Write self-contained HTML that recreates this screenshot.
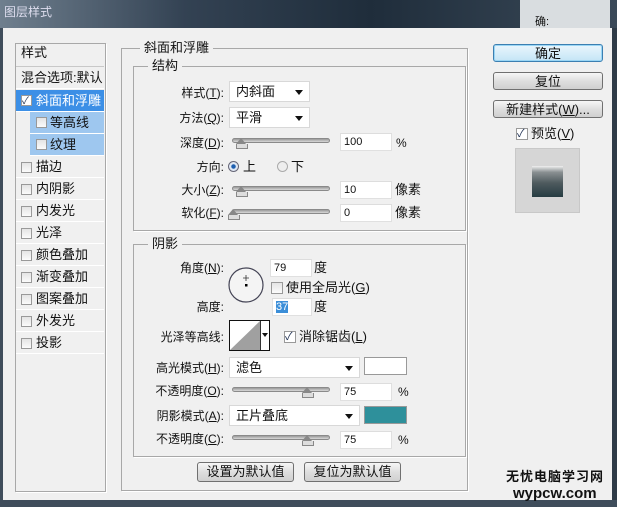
<!DOCTYPE html><html><head><meta charset="utf-8"><style>
*{margin:0;padding:0;box-sizing:border-box}
body{width:617px;height:507px;overflow:hidden;background:#f0f0f0;position:relative;font-family:"Liberation Sans","Noto Sans CJK SC",sans-serif;font-size:12px;color:#111}
.a{position:absolute}
.t{position:absolute;line-height:14px;white-space:nowrap}
.box{position:absolute;border:1px solid #a8a8a8;box-shadow:1px 1px 0 #fff}
.lg{position:absolute;background:#f0f0f0;padding:0 4px;line-height:14px;font-size:13px}
.row{position:absolute;left:16px;width:88px;height:22px;border-bottom:1px solid #fff;line-height:22px}
.cb{position:absolute;width:11px;height:11px;border:1px solid #999;background:linear-gradient(#e4e4e4,#fbfbfb)}
.inp{position:absolute;background:#fff;border:1px solid #e0e0e0;border-top-color:#ddd;height:18px;line-height:17px;padding-left:3px;font-size:11px}
.dd{position:absolute;background:#fff;border:1px solid #d8d8d8;height:21px;line-height:20px;padding-left:6px;font-size:13px}
.dd:after{content:"";position:absolute;right:6px;top:8px;border:4px solid transparent;border-top:5px solid #111}
.sl{position:absolute;height:5px;border-radius:3px;background:linear-gradient(#9a9a9a,#d8d8d8);border:1px solid #8a8a8a}
.th{position:absolute;width:0;height:0;border:5px solid transparent;border-bottom:6px solid #888}
.th:after{content:"";position:absolute;left:-5px;top:6px;width:10px;height:4px;background:#ddd;border:1px solid #888;border-top:0}
.btn{position:absolute;border:1px solid #707070;border-radius:3px;background:linear-gradient(#f6f6f6,#dedede 50%,#d0d0d0);text-align:center;line-height:17px;font-size:12px}
.lab{position:absolute;text-align:right;width:100px;line-height:14px;font-size:12px}
</style></head><body>
<div class="a" style="left:0;top:0;width:617px;height:28px;background:linear-gradient(90deg,#6f7f8e,#334253 30%,#1f2d3b 60%,#3a4958)"></div>
<div class="t" style="left:4px;top:5px;color:#dde;font-size:12px">图层样式</div>
<div class="a" style="left:520px;top:0;width:90px;height:28px;background:#d9dde0"></div>
<div class="t" style="left:535px;top:15px;font-size:11px">确:</div>
<div class="a" style="left:0;top:28px;width:3px;height:479px;background:#3f4d5b"></div>
<div class="a" style="left:612px;top:28px;width:5px;height:479px;background:#2f3b47"></div>
<div class="a" style="left:0;top:500px;width:617px;height:7px;background:#3f4d5b"></div>

<!-- left list -->
<div class="box" style="left:15px;top:43px;width:91px;height:449px"></div>
<div class="row" style="top:43px;height:24px;line-height:20px;padding-left:5px;font-size:13px;border-bottom-color:#c8c8c8">样式</div>
<div class="row" style="top:67px;padding-left:5px;font-size:13px">混合选项:默认</div>
<div class="row" style="top:90px;background:#3c8fe6;color:#fff;font-size:13px"><div class="cb" style="left:5px;top:5px;background:#fff"><span style="position:absolute;left:0;top:-5px;color:#235;font-size:10px">✓</span></div><span style="position:absolute;left:20px">斜面和浮雕</span></div>
<div class="row" style="top:112px;left:30px;width:74px;background:#9ec7ef;font-size:13px"><div class="cb" style="left:6px;top:5px"></div><span style="position:absolute;left:20px">等高线</span></div>
<div class="row" style="top:134px;left:30px;width:74px;background:#9ec7ef;font-size:13px"><div class="cb" style="left:6px;top:5px"></div><span style="position:absolute;left:20px">纹理</span></div>
<div class="row" style="top:156px;font-size:13px"><div class="cb" style="left:5px;top:6px"></div><span style="position:absolute;left:20px">描边</span></div>
<div class="row" style="top:178px;font-size:13px"><div class="cb" style="left:5px;top:6px"></div><span style="position:absolute;left:20px">内阴影</span></div>
<div class="row" style="top:200px;font-size:13px"><div class="cb" style="left:5px;top:6px"></div><span style="position:absolute;left:20px">内发光</span></div>
<div class="row" style="top:222px;font-size:13px"><div class="cb" style="left:5px;top:6px"></div><span style="position:absolute;left:20px">光泽</span></div>
<div class="row" style="top:244px;font-size:13px"><div class="cb" style="left:5px;top:6px"></div><span style="position:absolute;left:20px">颜色叠加</span></div>
<div class="row" style="top:266px;font-size:13px"><div class="cb" style="left:5px;top:6px"></div><span style="position:absolute;left:20px">渐变叠加</span></div>
<div class="row" style="top:288px;font-size:13px"><div class="cb" style="left:5px;top:6px"></div><span style="position:absolute;left:20px">图案叠加</span></div>
<div class="row" style="top:310px;font-size:13px"><div class="cb" style="left:5px;top:6px"></div><span style="position:absolute;left:20px">外发光</span></div>
<div class="row" style="top:332px;font-size:13px"><div class="cb" style="left:5px;top:6px"></div><span style="position:absolute;left:20px">投影</span></div>

<!-- group boxes -->
<div class="box" style="left:121px;top:48px;width:347px;height:443px"></div>
<div class="lg" style="left:140px;top:41px">斜面和浮雕</div>
<div class="box" style="left:133px;top:66px;width:333px;height:165px"></div>
<div class="lg" style="left:148px;top:59px">结构</div>
<div class="box" style="left:133px;top:244px;width:333px;height:213px"></div>
<div class="lg" style="left:148px;top:237px">阴影</div>

<!-- structure -->
<div class="lab" style="left:124px;top:86px">样式(<u>T</u>):</div>
<div class="dd" style="left:229px;top:81px;width:81px">内斜面</div>
<div class="lab" style="left:124px;top:111px">方法(<u>Q</u>):</div>
<div class="dd" style="left:229px;top:107px;width:81px">平滑</div>
<div class="lab" style="left:124px;top:136px">深度(<u>D</u>):</div>
<div class="sl" style="left:232px;top:138px;width:98px"></div><div class="th" style="left:236px;top:133px"></div>
<div class="inp" style="left:340px;top:133px;width:52px">100</div><div class="t" style="left:396px;top:136px">%</div>
<div class="lab" style="left:124px;top:160px">方向:</div>
<div class="a" style="left:228px;top:161px;width:11px;height:11px;border-radius:50%;border:1px solid #667;background:radial-gradient(#1d5fb0 30%,#e0e8f4 40%)"></div>
<div class="t" style="left:243px;top:160px;font-size:13px">上</div>
<div class="a" style="left:277px;top:161px;width:11px;height:11px;border-radius:50%;border:1px solid #aaa;background:#eee"></div>
<div class="t" style="left:291px;top:160px;font-size:13px">下</div>
<div class="lab" style="left:124px;top:183px">大小(<u>Z</u>):</div>
<div class="sl" style="left:232px;top:186px;width:98px"></div><div class="th" style="left:236px;top:181px"></div>
<div class="inp" style="left:340px;top:181px;width:52px">10</div><div class="t" style="left:395px;top:183px;font-size:13px">像素</div>
<div class="lab" style="left:124px;top:206px">软化(<u>F</u>):</div>
<div class="sl" style="left:232px;top:209px;width:98px"></div><div class="th" style="left:228px;top:204px"></div>
<div class="inp" style="left:340px;top:204px;width:52px">0</div><div class="t" style="left:395px;top:206px;font-size:13px">像素</div>

<!-- shadow -->
<div class="lab" style="left:124px;top:261px">角度(<u>N</u>):</div>
<svg class="a" style="left:227px;top:266px" width="38" height="38"><circle cx="19" cy="19" r="17" fill="#f4f4f4" stroke="#445" stroke-width="1.2"/><rect x="18" y="18" width="2.5" height="2.5" fill="#000"/><path d="M19 9v6M16 12h6" stroke="#333" stroke-width="0.8"/></svg>
<div class="inp" style="left:270px;top:259px;width:42px">79</div><div class="t" style="left:314px;top:261px;font-size:13px">度</div>
<div class="cb" style="left:271px;top:282px;width:12px;height:12px"></div><div class="t" style="left:286px;top:281px;font-size:13px">使用全局光(<u>G</u>)</div>
<div class="lab" style="left:124px;top:300px">高度:</div>
<div class="inp" style="left:272px;top:298px;width:40px"><span style="background:#3b8ed8;color:#fff">37</span></div><div class="t" style="left:314px;top:300px;font-size:13px">度</div>
<div class="lab" style="left:124px;top:330px">光泽等高线:</div>
<div class="a" style="left:229px;top:320px;width:41px;height:31px;border:1px solid #111;background:#fff"></div>
<svg class="a" style="left:230px;top:321px" width="30" height="29"><path d="M0 29L30 0V29Z" fill="#a0a0a0"/></svg>
<div class="a" style="left:260px;top:321px;width:1px;height:29px;background:#333"></div>
<div class="a" style="left:262px;top:333px;border:3px solid transparent;border-top:4px solid #111"></div>
<div class="cb" style="left:284px;top:331px;width:12px;height:12px;background:#fff"><span style="position:absolute;left:0;top:-4px;color:#235;font-size:11px">✓</span></div><div class="t" style="left:299px;top:330px;font-size:13px">消除锯齿(<u>L</u>)</div>
<div class="lab" style="left:124px;top:361px">高光模式(<u>H</u>):</div>
<div class="dd" style="left:229px;top:357px;width:131px">滤色</div>
<div class="a" style="left:364px;top:357px;width:43px;height:18px;background:#fff;border:1px solid #999"></div>
<div class="lab" style="left:124px;top:384px">不透明度(<u>O</u>):</div>
<div class="sl" style="left:232px;top:387px;width:98px"></div><div class="th" style="left:302px;top:382px"></div>
<div class="inp" style="left:340px;top:383px;width:52px">75</div><div class="t" style="left:398px;top:385px">%</div>
<div class="lab" style="left:124px;top:409px">阴影模式(<u>A</u>):</div>
<div class="dd" style="left:229px;top:405px;width:131px">正片叠底</div>
<div class="a" style="left:364px;top:406px;width:43px;height:18px;background:#2e909b;border:1px solid #999"></div>
<div class="lab" style="left:124px;top:432px">不透明度(<u>C</u>):</div>
<div class="sl" style="left:232px;top:435px;width:98px"></div><div class="th" style="left:302px;top:430px"></div>
<div class="inp" style="left:340px;top:431px;width:52px">75</div><div class="t" style="left:398px;top:433px">%</div>
<div class="btn" style="left:197px;top:462px;width:97px;height:20px;font-size:13px">设置为默认值</div>
<div class="btn" style="left:304px;top:462px;width:97px;height:20px;font-size:13px">复位为默认值</div>

<!-- right -->
<div class="btn" style="left:493px;top:44px;width:110px;height:18px;border-color:#3c7fb1;box-shadow:0 0 0 1px #9ad6f5 inset;background:linear-gradient(#eaf6fd,#c4e5f6);font-size:13px">确定</div>
<div class="btn" style="left:493px;top:72px;width:110px;height:18px;font-size:13px">复位</div>
<div class="btn" style="left:493px;top:100px;width:110px;height:18px;font-size:13px">新建样式(<u>W</u>)...</div>
<div class="cb" style="left:516px;top:128px;width:12px;height:12px;background:#fff"><span style="position:absolute;left:0;top:-4px;color:#235;font-size:11px">✓</span></div>
<div class="t" style="left:531px;top:127px;font-size:13px">预览(<u>V</u>)</div>
<div class="a" style="left:515px;top:148px;width:65px;height:65px;background:#d6d6d6;border:1px solid #c8c8c8"></div>
<div class="a" style="left:532px;top:166px;width:31px;height:31px;background:linear-gradient(#f0f0f0 0,#8a9092 20%,#4e5a5e 55%,#263c42)"></div>

<div class="t" style="left:506px;top:470px;font-size:13px;font-weight:bold;letter-spacing:1px">无忧电脑学习网</div>
<div class="t" style="left:513px;top:487px;font-size:15px;font-weight:bold">wypcw.com</div>
</body></html>
